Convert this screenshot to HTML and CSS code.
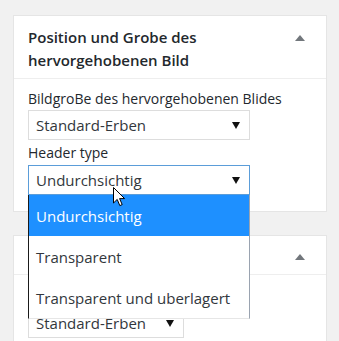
FILE: index.html
```html
<!DOCTYPE html>
<html lang="de">
<head>
<meta charset="utf-8">
<link rel="stylesheet" href="styles.css">
</head>
<body>
<div class="page">
  <section class="panel">
    <div class="panel-head">
      <h2 class="panel-title">Position und Grobe des hervorgehobenen Bild</h2>
      <span class="toggle"></span>
    </div>
    <div class="panel-body">
      <label class="field-label">BildgroBe des hervorgehobenen Blides</label>
      <div class="select">
        <span>Standard-Erben</span><span class="caret"></span>
      </div>
      <label class="field-label second">Header type</label>
      <div class="select-wrap">
        <div class="select focused">
          <span>Undurchsichtig</span><span class="caret"></span>
        </div>
        <ul class="dropdown">
          <li class="opt active">Undurchsichtig</li>
          <li class="opt">Transparent</li>
          <li class="opt">Transparent und uberlagert</li>
        </ul>
        <svg class="cursor" width="13" height="20" viewBox="0 0 13 20">
          <path d="M0.5 0.5 L0.5 16 L4.2 12.4 L6.8 18.6 L9.2 17.6 L6.6 11.6 L11.6 11.6 Z" fill="#fff" stroke="#000" stroke-width="1" stroke-linejoin="miter"/>
        </svg>
      </div>
    </div>
  </section>
  <section class="panel panel-two">
    <div class="panel-head short">
      <span class="toggle"></span>
    </div>
    <div class="panel-body lower">
      <div class="select narrow">
        <span>Standard-Erben</span><span class="caret"></span>
      </div>
    </div>
  </section>
</div>
</body>
</html>
```

FILE: styles.css
```css
html, body {
  margin: 0;
  padding: 0;
  background: #f1f1f1;
  font-family: "Open Sans", "Noto Sans", sans-serif;
  color: #23282d;
  overflow: hidden;
}

.page {
  padding: 15px 12px 0 13px;
  display: flex;
  flex-direction: column;
  gap: 23px;
}

.panel {
  background: #fff;
  border: 1px solid #e5e5e5;
}

.panel-head {
  display: flex;
  justify-content: space-between;
  align-items: flex-start;
  padding: 10px 14px 6px 14px;
  border-bottom: 1px solid #eee;
}

.panel-head.short {
  height: 39px;
  box-sizing: border-box;
  padding-top: 9px;
  justify-content: flex-end;
}

.panel-title {
  margin: 0;
  font-size: 15px;
  font-weight: 600;
  line-height: 23px;
  width: 230px;
}

.toggle {
  width: 0;
  height: 0;
  margin-top: 9px;
  margin-right: 7px;
  border-left: 5px solid transparent;
  border-right: 5px solid transparent;
  border-bottom: 6px solid #72777c;
}

.panel-body {
  padding: 10px 14px 16px 14px;
  display: flex;
  flex-direction: column;
  align-items: flex-start;
}

.panel-body.lower {
  padding-top: 33px;
  padding-bottom: 20px;
}

.field-label {
  font-size: 14px;
  line-height: 20px;
  margin-bottom: 1px;
}

.field-label.second {
  margin-top: 3px;
  margin-bottom: 2px;
}

.select {
  box-sizing: border-box;
  width: 222px;
  height: 30px;
  border: 1px solid #ddd;
  display: flex;
  align-items: center;
  justify-content: space-between;
  padding: 0 8px 0 7px;
  font-size: 15px;
  color: #32373c;
  background: #fff;
}

.select.focused {
  border-color: #5b9dd9;
}

.select.narrow {
  width: 156px;
}

.caret {
  width: 0;
  height: 0;
  border-left: 4px solid transparent;
  border-right: 4px solid transparent;
  border-top: 7px solid #111;
  margin-right: 1px;
}

.select-wrap {
  position: relative;
}

.dropdown {
  position: absolute;
  left: 0;
  top: 30px;
  z-index: 5;
  box-sizing: border-box;
  width: 222px;
  margin: 0;
  padding: 0;
  list-style: none;
  background: #fff;
  border-left: 1px solid #1a1a1a;
  border-right: 1px solid #9aa3b0;
  border-bottom: 1px solid #e6e6e6;
}

.opt {
  height: 41px;
  line-height: 42px;
  padding-left: 7px;
  font-size: 15px;
  color: #32373c;
}

.opt.active {
  background: #1e90ff;
  color: #fff;
}

.cursor {
  position: absolute;
  left: 85px;
  top: 22px;
  z-index: 6;
}
```
